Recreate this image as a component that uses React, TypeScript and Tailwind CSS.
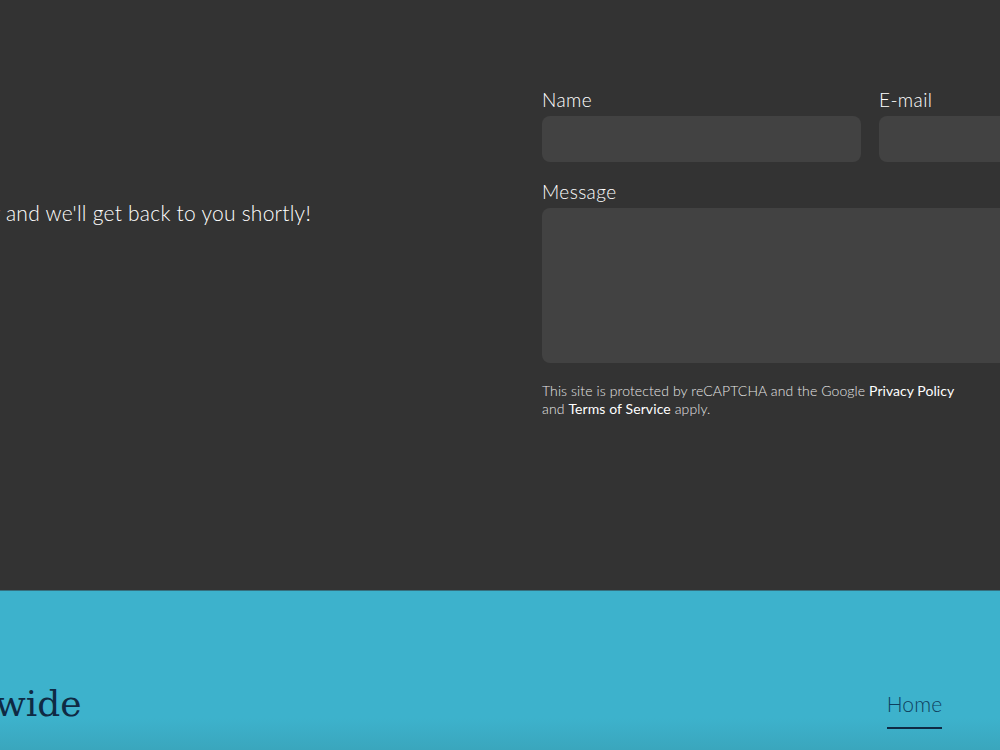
export default function App() {
  return (
    <div className="flex h-[750px] w-[1000px] flex-col overflow-hidden bg-[#333333] font-['Lato','Liberation_Sans',sans-serif]">
      {/* Contact section */}
      <section className="flex h-[590px] shrink-0 pt-[88px]">
        <div className="flex w-[542px] shrink-0 justify-end pr-[231px] pt-[111px]">
          <p className="whitespace-nowrap text-[21px] font-light leading-[28px] tracking-[0.25px] text-white">
            Contact us today and we'll get back to you shortly!
          </p>
        </div>
        <form className="w-[655px] shrink-0">
          <div className="flex gap-[18px]">
            <div className="w-[319px]">
              <label className="block text-[19px] font-light leading-[24px] tracking-[0.4px] text-white">Name</label>
              <input className="mt-[4px] block h-[46px] w-full rounded-lg bg-[#424242]" />
            </div>
            <div className="w-[318px]">
              <label className="block text-[19px] font-light leading-[24px] tracking-[0.4px] text-white">E-mail</label>
              <input className="mt-[4px] block h-[46px] w-full rounded-lg bg-[#424242]" />
            </div>
          </div>
          <label className="mt-[18px] block text-[19px] font-light leading-[24px] tracking-[0.4px] text-white">Message</label>
          <textarea className="mt-[4px] block h-[155px] w-full resize-none rounded-lg bg-[#424242]" />
          <p className="mt-[19px] w-[430px] text-[14px] font-light leading-[18px] tracking-[0.1px] text-[#e6e6e6]">
            This site is protected by reCAPTCHA and the Google{' '}
            <a className="font-normal tracking-[0.05px] text-white">Privacy Policy</a> and{' '}
            <a className="font-normal tracking-[0.1px] text-white">Terms of Service</a> apply.
          </p>
        </form>
      </section>

      {/* Footer */}
      <footer className="relative flex flex-1 items-start justify-between border-t border-[#35707f] bg-gradient-to-b from-[#3db2cc] from-80% to-[#3aa6bd]">
        <span className="-ml-[113px] mt-[88px] whitespace-nowrap font-['DejaVu_Serif',serif] text-[36px] leading-[50px] text-[#0f2a44]">
          Worldwide
        </span>
        <nav className="mr-[58px] mt-[99px] flex h-[39px] w-[55px] flex-col items-center justify-between">
          <a className="text-[21px] font-light leading-[28px] tracking-[0.1px] text-[#0f3f5e]">Home</a>
          <span className="block h-[2px] w-full bg-[#0f2a44]" />
        </nav>
      </footer>
    </div>
  );
}
